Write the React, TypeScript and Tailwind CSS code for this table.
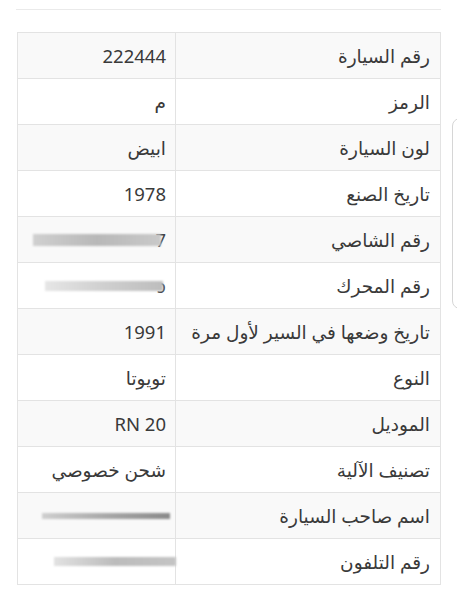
import React from "react";

type Blur = { w: number; h: number; tail?: string; shift?: number; tone: string };
type Row = { label: string; value?: string; blur?: Blur };

const rows: Row[] = [
  { label: "رقم السيارة", value: "222444" },
  { label: "الرمز", value: "م" },
  { label: "لون السيارة", value: "ابيض" },
  { label: "تاريخ الصنع", value: "1978" },
  { label: "رقم الشاصي", blur: { w: 128, h: 12, tail: "7", tone: "from-[#c9c9c9] via-[#b8b8b8] to-[#d0d0d0]" } },
  { label: "رقم المحرك", blur: { w: 118, h: 10, tail: "ɔ", tone: "from-[#bdbdbd] via-[#cfcfcf] to-[#e6e6e6]" } },
  { label: "تاريخ وضعها في السير لأول مرة", value: "1991" },
  { label: "النوع", value: "تويوتا" },
  { label: "الموديل", value: "RN 20" },
  { label: "تصنيف الآلية", value: "شحن خصوصي" },
  { label: "اسم صاحب السيارة", blur: { w: 128, h: 6, shift: -4, tone: "from-[#8a8a8a] via-[#a8a8a8] to-[#cfcfcf]" } },
  { label: "رقم التلفون", blur: { w: 122, h: 9, shift: -10, tone: "from-[#c4c4c4] via-[#bcbcbc] to-[#e2e2e2]" } },
];

const Blurred = ({ b }: { b: Blur }) => (
  <span className="inline-flex items-center" style={{ marginRight: b.shift ?? 0 }}>
    <span
      className={`inline-block bg-gradient-to-l ${b.tone} blur-[0.8px]`}
      style={{ width: b.w, height: b.h }}
    />
    {b.tail && <span className="ml-[-6px] text-[#444]">{b.tail}</span>}
  </span>
);

export default function App() {
  return (
    <div className="relative h-[600px] w-[457px] overflow-hidden bg-white font-['Noto_Sans','DejaVu_Sans',sans-serif] text-[#3a3a3a]">
      {/* top divider */}
      <div className="mx-[16px] mt-[9px] h-px bg-[#eaeaea]" />

      <table dir="rtl" className="ml-[17px] mt-[22px] w-[424px] border-collapse text-[18.5px]">
        <tbody>
          {rows.map((row, i) => (
            <tr key={i} className={i % 2 === 0 ? "bg-[#f9f9f9]" : "bg-white"}>
              <td className="h-[46px] w-[265px] border border-[#e3e3e3] pr-[10px] text-right align-middle">
                {row.label}
              </td>
              <td className="h-[46px] border border-[#e3e3e3] pl-[10px] text-left align-middle" dir="ltr">
                <div className="flex justify-end pr-[9px]">
                  {row.blur ? <Blurred b={row.blur} /> : <span dir="rtl">{row.value}</span>}
                </div>
              </td>
            </tr>
          ))}
        </tbody>
      </table>

      {/* scroll handle peeking from the right edge */}
      <div className="absolute left-[452px] top-[118px] h-[191px] w-[20px] rounded-[8px] border border-[#d6d6d6] bg-white" />
    </div>
  );
}
